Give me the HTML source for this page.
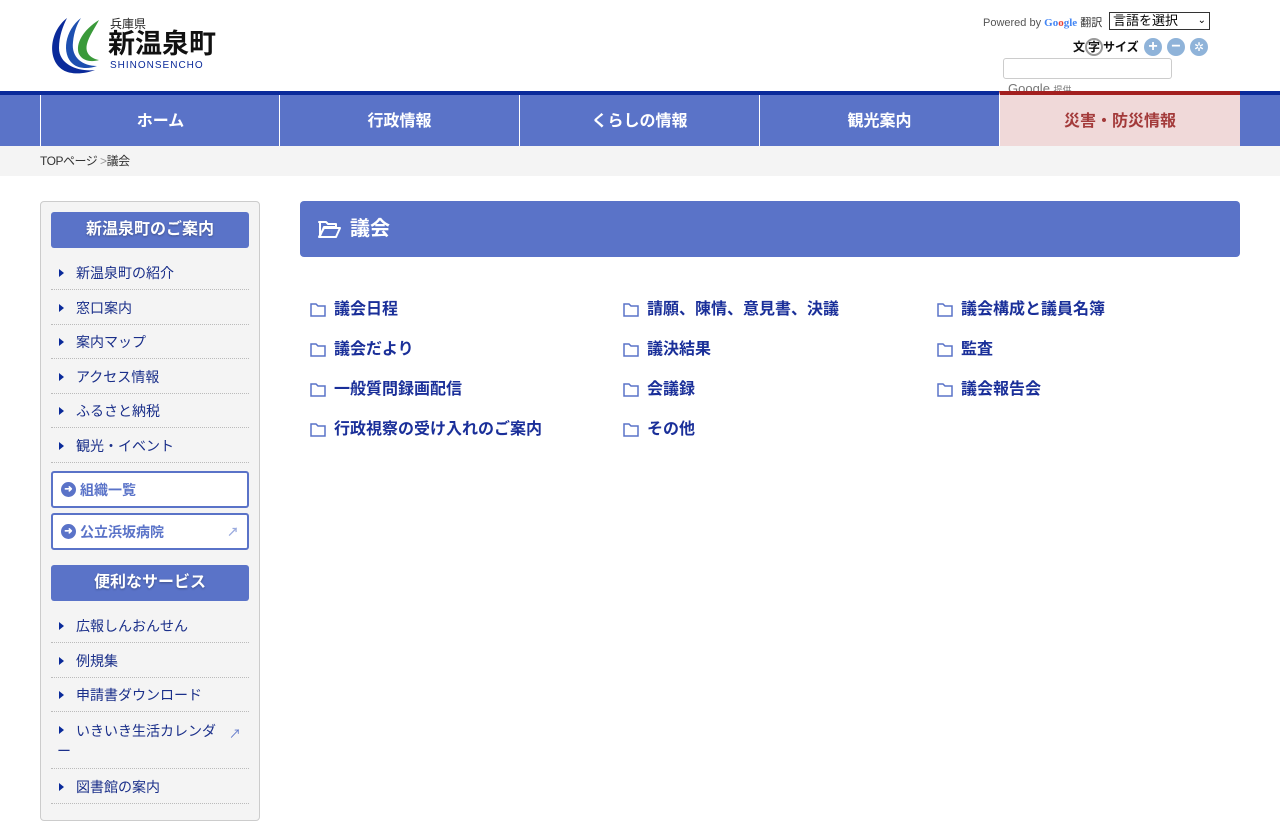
<!DOCTYPE html>
<html lang="ja"><head><meta charset="utf-8"><style>
*{margin:0;padding:0;box-sizing:border-box}
body{width:1280px;height:800px;overflow:hidden;background:#fff;font-family:"Liberation Sans","Noto Sans CJK JP",sans-serif;position:relative}
.abs{position:absolute}
.nav{top:91px;left:0;width:1280px;height:55px;background:#5a73c8;border-top:4px solid #0a2a9a}
.nav div{position:absolute;top:0;height:51px;width:240px;border-left:1px solid #fff;color:#fff;font-weight:bold;font-size:16px;text-align:center;line-height:54px}
.nav .dis{background:#f0d9d9;color:#a33a3a;border-left:1px solid #fff;top:-4px;height:55px;border-top:4px solid #a31f1f;line-height:54px}
.bc{top:146px;left:0;width:1280px;height:30px;background:#f4f4f4;font-size:12px;color:#333;line-height:30px;padding-left:40px;letter-spacing:-0.5px}
.side{top:201px;left:40px;width:220px;height:620px;background:#f4f4f4;border:1px solid #ccc;border-radius:4px}
.h{position:absolute;left:10px;width:198px;height:36px;background:#5a73c8;border-radius:3px;color:#fff;font-weight:bold;font-size:16px;text-align:center;line-height:36px;text-shadow:0 1px 2px rgba(0,0,0,.3)}
.li{position:absolute;left:10px;width:198px;border-bottom:1px dotted #bbb;font-size:14px;color:#1a2f8a;padding-left:25px;line-height:36px;height:35px}
.li:before{content:"";position:absolute;left:8px;top:14px;border-left:5px solid #0a2a9a;border-top:4px solid transparent;border-bottom:4px solid transparent}
.bx{position:absolute;left:10px;width:198px;height:37px;background:#fff;border:2px solid #5a73c8;border-radius:3px;color:#5a73c8;font-weight:bold;font-size:14px;line-height:35px;padding-left:27px}
.bx:before{content:"➜";position:absolute;left:8px;top:9px;width:15px;height:15px;border-radius:50%;background:#5a73c8;color:#fff;font-size:10px;line-height:15px;text-align:center}
.ttl{top:201px;left:300px;width:940px;height:56px;background:#5a73c8;border-radius:4px;color:#fff;font-weight:bold;font-size:20px;line-height:56px;padding-left:50px}
.lk{position:absolute;font-size:16px;font-weight:bold;color:#1a2f99;padding-left:24px;line-height:20px;white-space:nowrap}
.lk svg{position:absolute;left:0;top:3px}
</style></head><body>
<svg class="abs" style="left:45px;top:14px" width="60" height="62" viewBox="0 0 60 62">
<path d="M22 4 C4 18 2 46 18 56 C26 61 40 60 50 56 C36 58 14 52 14 34 C14 22 18 12 22 4Z" fill="#0a2a9a"/>
<path d="M36 4 C20 16 16 40 28 50 C34 55 44 55 52 52 C38 52 26 44 28 28 C29 18 32 10 36 4Z" fill="#1d4fb0"/>
<path d="M54 6 C38 16 30 30 34 40 C38 48 48 48 54 46 C44 44 40 38 42 30 C44 22 50 14 54 6Z" fill="#3a9a3a"/>
</svg>
<div class="abs" style="left:110px;top:15px;font-size:12px;color:#222">兵庫県</div>
<div class="abs" style="left:108px;top:27px;font-size:27px;font-weight:bold;color:#111;line-height:34px">新温泉町</div>
<div class="abs" style="left:110px;top:60px;font-size:10px;color:#0a2a9a;letter-spacing:1px">SHINONSENCHO</div>
<div class="abs" style="left:983px;top:14px;font-size:11px;color:#555">Powered by <span style="color:#4285f4;font-family:'Liberation Serif',serif;font-weight:bold">Go<span style="color:#ea4335">o</span>gle</span> <span style="color:#333">翻訳</span></div>
<div class="abs" style="left:1109px;top:12px;width:101px;height:18px;border:1px solid #333;font-size:13px;line-height:16px;padding-left:3px;background:#fff">言語を選択 <span style="float:right;padding-right:3px;font-size:10px">⌄</span></div>
<div class="abs" style="left:1073px;top:38px;font-size:12px;font-weight:bold;color:#111">文<span style="border:2px solid #999;border-radius:50%;padding:0 1px">字</span>サイズ</div>
<div class="abs" style="left:1144px;top:38px;width:18px;height:18px;border-radius:50%;background:#8fb3d9;color:#fff;text-align:center;font-weight:bold;line-height:18px">+</div>
<div class="abs" style="left:1167px;top:38px;width:18px;height:18px;border-radius:50%;background:#8fb3d9;color:#fff;text-align:center;font-weight:bold;line-height:18px">−</div>
<div class="abs" style="left:1190px;top:38px;width:18px;height:18px;border-radius:50%;background:#8fb3d9;color:#fff;text-align:center;font-size:12px;line-height:18px">✲</div>
<div class="abs" style="left:1003px;top:58px;width:169px;height:21px;border:1px solid #ccc;border-radius:3px;background:#fff"></div>
<div class="abs" style="left:1008px;top:80px;font-size:13px;color:#777;height:11px;overflow:hidden;line-height:17px">Google <span style="font-size:9px">提供</span></div>
<div class="abs nav">
<div style="left:40px">ホーム</div><div style="left:279px">行政情報</div><div style="left:519px">くらしの情報</div><div style="left:759px">観光案内</div><div class="dis" style="left:999px;width:241px">災害・防災情報</div>
</div>
<div class="abs bc">TOPページ <span style="color:#999">&gt;</span>議会</div>
<div class="abs side">
<div class="h" style="top:10px">新温泉町のご案内</div>
<div class="li" style="top:53px">新温泉町の紹介</div>
<div class="li" style="top:88px">窓口案内</div>
<div class="li" style="top:122px">案内マップ</div>
<div class="li" style="top:157px">アクセス情報</div>
<div class="li" style="top:191px">ふるさと納税</div>
<div class="li" style="top:226px">観光・イベント</div>
<div class="bx" style="top:269px">組織一覧</div>
<div class="bx" style="top:311px">公立浜坂病院<span style="position:absolute;right:8px;font-size:12px;color:#9aaade">↗</span></div>
<div class="h" style="top:363px">便利なサービス</div>
<div class="li" style="top:406px">広報しんおんせん</div>
<div class="li" style="top:441px">例規集</div>
<div class="li" style="top:475px">申請書ダウンロード</div>
<div class="li" style="top:510px;height:57px;line-height:20px;padding-top:9px;padding-left:6px;padding-right:30px;text-indent:19px">いきいき生活カレンダー<span style="position:absolute;right:8px;top:12px;font-size:12px;color:#5a73c8;text-indent:0">↗</span></div>
<div class="li" style="top:567px">図書館の案内</div>
</div>
<div class="abs ttl"><svg style="position:absolute;left:17px;top:19px" width="24" height="18" viewBox="0 0 24 18"><path d="M2 2h7l2 2h8v3H7L3 16V2z M7 8h16l-4 9H2z" fill="none" stroke="#fff" stroke-width="2" stroke-linejoin="round"/></svg>議会</div>
<div class="abs" style="left:310px;top:300px;width:930px">
<div class="lk" style="left:0;top:0"><svg width="16" height="14" viewBox="0 0 16 14"><path d="M1 1h5l2 2h7v10H1z" fill="none" stroke="#5a73c8" stroke-width="1.5"/></svg>議会日程</div>
<div class="lk" style="left:313px;top:0"><svg width="16" height="14" viewBox="0 0 16 14"><path d="M1 1h5l2 2h7v10H1z" fill="none" stroke="#5a73c8" stroke-width="1.5"/></svg>請願、陳情、意見書、決議</div>
<div class="lk" style="left:627px;top:0"><svg width="16" height="14" viewBox="0 0 16 14"><path d="M1 1h5l2 2h7v10H1z" fill="none" stroke="#5a73c8" stroke-width="1.5"/></svg>議会構成と議員名簿</div>
<div class="lk" style="left:0;top:40px"><svg width="16" height="14" viewBox="0 0 16 14"><path d="M1 1h5l2 2h7v10H1z" fill="none" stroke="#5a73c8" stroke-width="1.5"/></svg>議会だより</div>
<div class="lk" style="left:313px;top:40px"><svg width="16" height="14" viewBox="0 0 16 14"><path d="M1 1h5l2 2h7v10H1z" fill="none" stroke="#5a73c8" stroke-width="1.5"/></svg>議決結果</div>
<div class="lk" style="left:627px;top:40px"><svg width="16" height="14" viewBox="0 0 16 14"><path d="M1 1h5l2 2h7v10H1z" fill="none" stroke="#5a73c8" stroke-width="1.5"/></svg>監査</div>
<div class="lk" style="left:0;top:80px"><svg width="16" height="14" viewBox="0 0 16 14"><path d="M1 1h5l2 2h7v10H1z" fill="none" stroke="#5a73c8" stroke-width="1.5"/></svg>一般質問録画配信</div>
<div class="lk" style="left:313px;top:80px"><svg width="16" height="14" viewBox="0 0 16 14"><path d="M1 1h5l2 2h7v10H1z" fill="none" stroke="#5a73c8" stroke-width="1.5"/></svg>会議録</div>
<div class="lk" style="left:627px;top:80px"><svg width="16" height="14" viewBox="0 0 16 14"><path d="M1 1h5l2 2h7v10H1z" fill="none" stroke="#5a73c8" stroke-width="1.5"/></svg>議会報告会</div>
<div class="lk" style="left:0;top:120px"><svg width="16" height="14" viewBox="0 0 16 14"><path d="M1 1h5l2 2h7v10H1z" fill="none" stroke="#5a73c8" stroke-width="1.5"/></svg>行政視察の受け入れのご案内</div>
<div class="lk" style="left:313px;top:120px"><svg width="16" height="14" viewBox="0 0 16 14"><path d="M1 1h5l2 2h7v10H1z" fill="none" stroke="#5a73c8" stroke-width="1.5"/></svg>その他</div>
</div>
</body></html>
